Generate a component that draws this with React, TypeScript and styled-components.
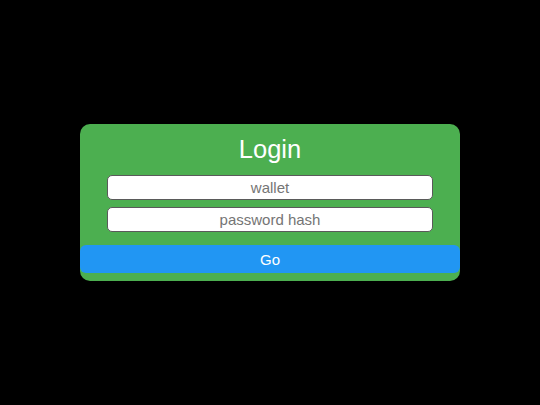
import React from 'react'
import styled, { createGlobalStyle } from 'styled-components'

const GlobalStyle = createGlobalStyle`
  html, body {
    margin: 0;
    padding: 0;
    background: #000;
    font-family: 'Liberation Sans', Arial, sans-serif;
  }
`

const Screen = styled.div`
  width: 540px;
  height: 405px;
  display: flex;
  align-items: center;
  justify-content: center;
  background: #000;
`

const LoginCard = styled.form`
  width: 380px;
  box-sizing: border-box;
  display: flex;
  flex-direction: column;
  padding: 11px 0 8px 0;
  background-color: #4caf50;
  border-radius: 10px;
`

const Title = styled.h1`
  margin: 0;
  font-size: 25.5px;
  font-weight: 400;
  line-height: 28px;
  color: #fff;
  text-align: center;
`

const Fields = styled.div`
  display: flex;
  flex-direction: column;
  gap: 7px;
  padding: 0 27px;
  margin-top: 12px;
`

const TextInput = styled.input`
  height: 25px;
  box-sizing: border-box;
  border: 1px solid #5a5a5a;
  border-radius: 5px;
  background: #fff;
  font-family: 'Liberation Sans', Arial, sans-serif;
  font-size: 15px;
  text-align: center;
  color: #222;
  outline: none;
  padding: 0 6px;

  &::placeholder {
    color: #757575;
  }
`

const GoButton = styled.button`
  margin-top: 13px;
  height: 28px;
  border: none;
  border-radius: 6px;
  background-color: #2196f3;
  color: #fff;
  font-family: 'Liberation Sans', Arial, sans-serif;
  font-size: 15px;
  line-height: 28px;
  padding: 1px 0 0 0;
  cursor: pointer;
`

const App = () => {
  return (
    <Screen>
      <GlobalStyle />
      <LoginCard onSubmit={(e) => e.preventDefault()}>
        <Title>Login</Title>
        <Fields>
          <TextInput placeholder='wallet' />
          <TextInput placeholder='password hash' />
        </Fields>
        <GoButton type='submit'>Go</GoButton>
      </LoginCard>
    </Screen>
  )
}

export default App
